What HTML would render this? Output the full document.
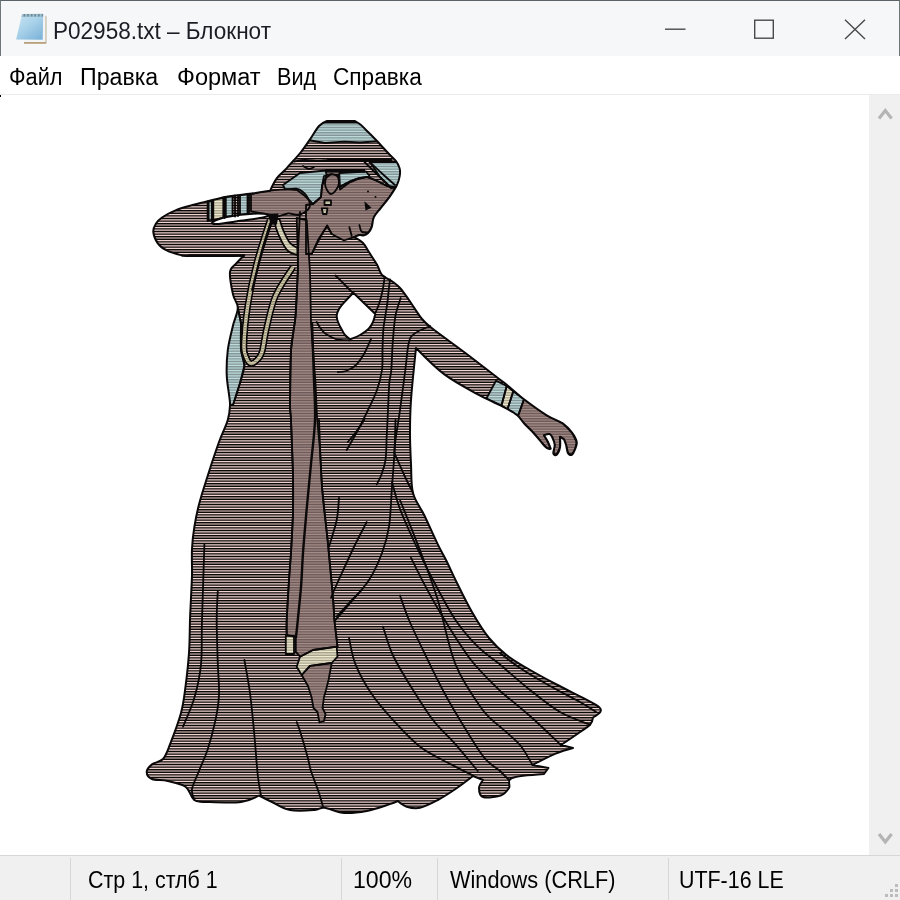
<!DOCTYPE html>
<html lang="ru"><head><meta charset="utf-8"><title>P02958.txt – Блокнот</title>
<style>
html,body{margin:0;padding:0;background:#fff;}
body{width:900px;height:900px;position:relative;overflow:hidden;font-family:"Liberation Sans",sans-serif;color:#000;}
.abs{position:absolute;}
#title{left:0;top:0;width:900px;height:56px;background:#f6f7f9;box-sizing:border-box;border-top:1.6px solid #596367;border-left:1.5px solid #6f777a;border-right:1.5px solid #6f777a;}
.t{position:absolute;white-space:nowrap;font-size:23px;line-height:26px;transform-origin:0 50%;}
#menu{left:0;top:56px;width:900px;height:38px;background:#fff;border-bottom:1.2px solid #ebebeb;}
#scroll{left:869px;top:95px;width:31px;height:760px;background:#f0f0f0;}
#status{left:0;top:855px;width:900px;height:45px;background:#f0f0f0;border-top:1px solid #d7d7d7;box-sizing:border-box;}
.sep{position:absolute;top:858px;width:1px;height:42px;background:#d7d7d7;}
</style></head><body>
<div id="title" class="abs"></div>
<svg class="abs" style="left:12px;top:8px" width="40" height="40" viewBox="12 8 40 40">
<defs><linearGradient id="ig" x1="0.1" y1="0" x2="0.9" y2="1"><stop offset="0" stop-color="#c6e2f1"/><stop offset="0.45" stop-color="#a9d2ea"/><stop offset="1" stop-color="#7cb2d8"/></linearGradient></defs>
<path d="M24,42 L45.3,42 L45.3,15.6 L46.4,16.2 L46.4,43.7 L24,43.7Z" fill="#b0a382"/>
<path d="M26,43.2h19" stroke="#d2a070" stroke-width="0.9" stroke-dasharray="1.2 1"/>
<path d="M23,40 L43,15 L45.3,15.4 L45.3,42 L23.8,42Z" fill="#f3f4f5"/>
<path d="M22,14.4 L43.2,14.2 L42.7,39.8 L16.1,39.6Z" fill="url(#ig)"/>
<path d="M22.2,13.9 L43.2,13.7 L43.1,16.9 L21.4,17.1Z" fill="#9fc0cf"/>
<path d="M23.6,15.3H43" stroke="#6f8c9a" stroke-width="2.6" stroke-dasharray="1.7 1.9"/>
</svg>
<span class="t" style="left:53.2px;top:17.7px;transform:scaleX(0.98);color:#1c1c24;">P02958.txt – Блокнот</span>
<svg class="abs" style="left:650px;top:10px" width="230" height="40" viewBox="650 10 230 40" fill="none" stroke="#4a4a4a" stroke-width="1.4">
<path d="M665,29.2h20.5"/><rect x="754.7" y="20.2" width="18.6" height="18"/><path d="M845,19.8L865,39M865,19.8L845,39"/></svg>
<div id="menu" class="abs"></div>
<span class="t" style="left:9px;top:64.3px;transform:scaleX(0.946);color:#000;">Файл</span><span class="t" style="left:79.5px;top:64.3px;transform:scaleX(1.007);color:#000;">Правка</span><span class="t" style="left:176.5px;top:64.3px;transform:scaleX(1.023);color:#000;">Формат</span><span class="t" style="left:276.6px;top:64.3px;transform:scaleX(0.94);color:#000;">Вид</span><span class="t" style="left:333px;top:64.3px;transform:scaleX(0.984);color:#000;">Справка</span>
<div class="abs" style="left:0;top:95px;width:1.4px;height:2.2px;background:#000"></div>
<div id="scroll" class="abs"></div>
<svg class="abs" style="left:869px;top:96px" width="31" height="760" viewBox="869 96 31 760" fill="none" stroke="#b4b4b4" stroke-width="3.2">
<path d="M879,118.5L885.3,110.5L891.6,118.5"/><path d="M879,834L885.3,842L891.6,834"/></svg>
<svg id="fig" class="abs" style="left:0;top:0" width="900" height="900" viewBox="0 0 900 900">
<defs>
<path id="scan" d="M130 96.3h480M130 98.9h480M130 101.5h480M130 104.1h480M130 106.7h480M130 109.3h480M130 111.9h480M130 114.5h480M130 117.1h480M130 119.7h480M130 122.3h480M130 124.9h480M130 127.5h480M130 130.1h480M130 132.7h480M130 135.3h480M130 137.9h480M130 140.5h480M130 143.1h480M130 145.7h480M130 148.3h480M130 150.9h480M130 153.5h480M130 156.1h480M130 158.7h480M130 161.3h480M130 163.9h480M130 166.5h480M130 169.1h480M130 171.7h480M130 174.3h480M130 176.9h480M130 179.5h480M130 182.1h480M130 184.7h480M130 187.3h480M130 189.9h480M130 192.5h480M130 195.1h480M130 197.7h480M130 200.3h480M130 202.9h480M130 205.5h480M130 208.1h480M130 210.7h480M130 213.3h480M130 215.9h480M130 218.5h480M130 221.1h480M130 223.7h480M130 226.3h480M130 228.9h480M130 231.5h480M130 234.1h480M130 236.7h480M130 239.3h480M130 241.9h480M130 244.5h480M130 247.1h480M130 249.7h480M130 252.3h480M130 254.9h480M130 257.5h480M130 260.1h480M130 262.7h480M130 265.3h480M130 267.9h480M130 270.5h480M130 273.1h480M130 275.7h480M130 278.3h480M130 280.9h480M130 283.5h480M130 286.1h480M130 288.7h480M130 291.3h480M130 293.9h480M130 296.5h480M130 299.1h480M130 301.7h480M130 304.3h480M130 306.9h480M130 309.5h480M130 312.1h480M130 314.7h480M130 317.3h480M130 319.9h480M130 322.5h480M130 325.1h480M130 327.7h480M130 330.3h480M130 332.9h480M130 335.5h480M130 338.1h480M130 340.7h480M130 343.3h480M130 345.9h480M130 348.5h480M130 351.1h480M130 353.7h480M130 356.3h480M130 358.9h480M130 361.5h480M130 364.1h480M130 366.7h480M130 369.3h480M130 371.9h480M130 374.5h480M130 377.1h480M130 379.7h480M130 382.3h480M130 384.9h480M130 387.5h480M130 390.1h480M130 392.7h480M130 395.3h480M130 397.9h480M130 400.5h480M130 403.1h480M130 405.7h480M130 408.3h480M130 410.9h480M130 413.5h480M130 416.1h480M130 418.7h480M130 421.3h480M130 423.9h480M130 426.5h480M130 429.1h480M130 431.7h480M130 434.3h480M130 436.9h480M130 439.5h480M130 442.1h480M130 444.7h480M130 447.3h480M130 449.9h480M130 452.5h480M130 455.1h480M130 457.7h480M130 460.3h480M130 462.9h480M130 465.5h480M130 468.1h480M130 470.7h480M130 473.3h480M130 475.9h480M130 478.5h480M130 481.1h480M130 483.7h480M130 486.3h480M130 488.9h480M130 491.5h480M130 494.1h480M130 496.7h480M130 499.3h480M130 501.9h480M130 504.5h480M130 507.1h480M130 509.7h480M130 512.3h480M130 514.9h480M130 517.5h480M130 520.1h480M130 522.7h480M130 525.3h480M130 527.9h480M130 530.5h480M130 533.1h480M130 535.7h480M130 538.3h480M130 540.9h480M130 543.5h480M130 546.1h480M130 548.7h480M130 551.3h480M130 553.9h480M130 556.5h480M130 559.1h480M130 561.7h480M130 564.3h480M130 566.9h480M130 569.5h480M130 572.1h480M130 574.7h480M130 577.3h480M130 579.9h480M130 582.5h480M130 585.1h480M130 587.7h480M130 590.3h480M130 592.9h480M130 595.5h480M130 598.1h480M130 600.7h480M130 603.3h480M130 605.9h480M130 608.5h480M130 611.1h480M130 613.7h480M130 616.3h480M130 618.9h480M130 621.5h480M130 624.1h480M130 626.7h480M130 629.3h480M130 631.9h480M130 634.5h480M130 637.1h480M130 639.7h480M130 642.3h480M130 644.9h480M130 647.5h480M130 650.1h480M130 652.7h480M130 655.3h480M130 657.9h480M130 660.5h480M130 663.1h480M130 665.7h480M130 668.3h480M130 670.9h480M130 673.5h480M130 676.1h480M130 678.7h480M130 681.3h480M130 683.9h480M130 686.5h480M130 689.1h480M130 691.7h480M130 694.3h480M130 696.9h480M130 699.5h480M130 702.1h480M130 704.7h480M130 707.3h480M130 709.9h480M130 712.5h480M130 715.1h480M130 717.7h480M130 720.3h480M130 722.9h480M130 725.5h480M130 728.1h480M130 730.7h480M130 733.3h480M130 735.9h480M130 738.5h480M130 741.1h480M130 743.7h480M130 746.3h480M130 748.9h480M130 751.5h480M130 754.1h480M130 756.7h480M130 759.3h480M130 761.9h480M130 764.5h480M130 767.1h480M130 769.7h480M130 772.3h480M130 774.9h480M130 777.5h480M130 780.1h480M130 782.7h480M130 785.3h480M130 787.9h480M130 790.5h480M130 793.1h480M130 795.7h480M130 798.3h480M130 800.9h480M130 803.5h480M130 806.1h480M130 808.7h480M130 811.3h480M130 813.9h480M130 816.5h480M130 819.1h480M130 821.7h480M130 824.3h480M130 826.9h480M130 829.5h480" fill="none" stroke-width="1.43"/>
<path id="sil" fill-rule="evenodd" clip-rule="evenodd" d="M327,121C327.0,121.0 355.0,121.0 355,121C355.0,121.0 359.2,123.5 361,125C362.8,126.5 363.5,127.5 366,130C368.5,132.5 372.2,136.0 376,140C379.8,144.0 385.7,150.5 389,154C392.3,157.5 394.2,158.7 396,161C397.8,163.3 398.8,165.8 399.5,168C400.2,170.2 400.2,171.8 400,174C399.8,176.2 399.2,178.8 398.5,181C397.8,183.2 396.0,187.0 396,187C396.0,187.0 392.0,193.6 389.4,197.2C386.8,200.8 383.1,205.0 380.5,208.3C377.9,211.6 375.4,214.0 373.9,217.2C372.4,220.3 372.6,224.6 371.7,227.2C370.8,229.8 369.6,231.5 368.3,232.8C367.0,234.2 365.5,234.9 364,235.3C362.5,235.7 361.1,234.7 359.4,235C357.7,235.3 353.9,237.2 353.9,237.2C353.9,237.2 360.2,240.2 362.8,242.8C365.4,245.4 367.0,249.1 369.4,252.8C371.8,256.5 375.1,261.3 377.2,265C379.3,268.7 379.4,272.2 382,275C384.6,277.8 390.0,279.8 393,282C396.0,284.2 397.3,285.0 400,288C402.7,291.0 405.3,294.8 409,300C412.7,305.2 418.0,314.2 422,319C426.0,323.8 425.6,323.2 433,329C440.4,334.8 455.9,345.8 466.7,354C477.5,362.2 491.1,372.9 497.8,378C504.5,383.1 502.3,381.1 506.7,384.7C511.1,388.2 517.3,394.2 524,399.3C530.7,404.4 540.2,411.3 546.7,415.3C553.2,419.3 558.5,420.4 562.7,423.3C566.9,426.2 569.7,429.6 572,432.7C574.3,435.8 576.2,439.3 576.7,442C577.2,444.7 576.1,446.6 575.3,448.7C574.5,450.8 573.2,453.9 572,454.7C570.8,455.5 569.0,455.0 568,453.3C567.0,451.6 566.7,447.0 566,444.7C565.3,442.4 564.0,439.3 564,439.3C564.0,439.3 560.0,436.7 560,436.7C560.0,436.7 560.5,444.3 560,447.3C559.5,450.3 557.8,453.7 556.7,454.7C555.6,455.7 553.6,455.0 553.3,453.3C553.0,451.6 554.9,447.5 554.7,444.7C554.5,441.9 552.0,436.7 552,436.7C552.0,436.7 550.6,434.2 549.3,434C548.0,433.8 544.0,435.3 544,435.3C544.0,435.3 546.9,439.8 548,442C549.1,444.2 550.7,448.7 550.7,448.7C550.7,448.7 548.5,449.3 546.7,448C544.9,446.7 542.2,443.2 540,440.7C537.8,438.1 536.0,435.6 533.3,432.7C530.6,429.8 526.7,426.2 524,423.3C521.3,420.4 520.2,417.7 517.3,415.3C514.4,412.9 510.7,410.9 506.7,408.7C502.7,406.5 498.1,404.4 493.3,402C488.5,399.6 486.0,399.0 477.8,394.4C469.6,389.8 454.7,382.1 444.4,374.4C434.1,366.7 416.0,348.0 416,348C416.0,348.0 412.0,385.8 411,400C410.0,414.2 410.0,422.3 410,433C410.0,443.7 410.5,454.0 411,464C411.5,474.0 410.8,484.4 413,493C415.2,501.6 420.3,506.9 424.4,515.5C428.5,524.1 434.2,537.0 437.8,544.4C441.4,551.8 442.8,553.6 446,560C449.2,566.4 452.7,574.3 457,583C461.3,591.7 466.7,602.8 472,612C477.3,621.2 483.2,630.8 489,638C494.8,645.2 500.2,650.0 506.5,655C512.8,660.0 518.5,663.2 526.7,668C534.9,672.8 546.0,678.9 555.6,684C565.2,689.1 577.3,694.9 584.5,698.7C591.7,702.5 596.4,704.8 599,707C601.6,709.2 601.4,710.0 600.4,711.7C599.4,713.5 593.0,717.5 593,717.5C593.0,717.5 592.4,722.1 590,724.7C587.6,727.3 583.5,729.6 578.7,733C573.9,736.4 561.0,745.0 561,745C561.0,745.0 573.0,748.0 573,748C573.0,748.0 562.4,750.8 555.6,753.6C548.9,756.4 532.5,765.0 532.5,765C532.5,765.0 548.4,768.0 548.4,768C548.4,768.0 544.0,774.0 544,774C544.0,774.0 517.8,775.7 512,778C506.2,780.3 510.9,785.1 509,788C507.1,790.9 505.0,794.0 500.7,795.5C496.4,797.0 486.6,798.2 483,797C479.4,795.8 479.0,790.8 479,788C479.0,785.2 483.0,780.0 483,780C483.0,780.0 473.0,776.0 473,776C473.0,776.0 461.4,785.0 455.5,789C449.6,793.0 443.7,796.9 437.8,800C431.9,803.1 425.2,806.7 420,807.8C414.8,808.9 410.4,807.8 406.7,806.7C403.0,805.6 397.8,801.0 397.8,801C397.8,801.0 394.2,802.7 389,804.4C383.8,806.1 374.1,809.6 366.7,811C359.3,812.4 351.4,813.5 344.4,813C337.3,812.5 329.4,808.3 324.4,807.8C319.4,807.3 320.1,809.6 314.4,810C308.7,810.4 297.1,811.3 290,810C282.9,808.7 277.2,804.4 272,802C266.8,799.6 259.0,795.5 259,795.5C259.0,795.5 249.5,800.9 241,802C232.5,803.1 215.6,802.3 207.8,802C200.0,801.7 198.1,802.5 194.4,800C190.7,797.5 189.9,789.9 185.5,786.7C181.1,783.5 173.4,782.3 167.8,781C162.2,779.7 155.5,780.5 152,779C148.5,777.5 146.7,774.4 146.7,772C146.7,769.6 149.3,766.6 152,764.4C154.7,762.2 160.0,762.3 163,759C166.0,755.7 167.0,752.1 170,744.4C173.0,736.7 178.4,722.6 181,713C183.6,703.4 184.2,696.7 185.5,686.7C186.8,676.7 188.2,664.1 189,653C189.8,641.9 189.7,629.2 190,620C190.3,610.8 190.7,605.2 191,597.8C191.3,590.4 191.8,583.6 192,575.5C192.2,567.4 191.6,557.1 192,549C192.4,540.9 193.2,534.1 194.4,526.7C195.6,519.3 196.8,512.9 199,504.4C201.2,495.9 204.5,485.9 207.8,475.5C211.1,465.1 215.7,451.2 219,442C222.3,432.8 226.0,426.1 227.8,420C229.6,413.9 229.8,409.8 230,405.5C230.2,401.2 229.6,399.6 229,394.4C228.4,389.2 226.9,381.8 226.7,374.4C226.5,367.0 226.8,358.1 227.8,350C228.9,341.9 231.3,332.5 233,325.5C234.7,318.5 237.8,313.0 237.8,307.8C237.8,302.6 234.3,300.4 233,294.4C231.7,288.4 229.4,277.2 230,272C230.6,266.8 234.4,265.8 236.7,263C239.0,260.2 244.0,255.5 244,255.5C244.0,255.5 233.0,256.0 233,256C233.0,256.0 197.8,256.2 189,256C180.2,255.8 183.7,255.8 180,254.9C176.3,254.0 170.4,252.3 166.7,250.4C163.0,248.5 160.0,246.4 157.8,243.3C155.6,240.2 153.6,235.1 153.3,231.8C153.0,228.5 154.6,225.9 156,223.5C157.4,221.1 158.8,219.7 162,217.5C165.2,215.3 171.0,212.3 175.5,210.4C180.0,208.5 183.8,207.5 189,206C194.2,204.5 200.4,203.1 206.7,201.5C213.0,199.9 218.9,198.1 226.7,196.7C234.5,195.3 246.1,194.3 253.3,193.3C260.5,192.3 270.0,190.8 270,190.8C270.0,190.8 274.2,181.8 276.7,178.3C279.2,174.8 282.8,172.3 285,170C287.2,167.7 287.3,167.4 290,164.4C292.7,161.4 297.7,156.2 301,152C304.3,147.8 307.0,143.7 310,139.4C313.0,135.1 316.2,129.1 319,126C321.8,122.9 327.0,121.0 327,121ZM353.3,292.7C353.3,292.7 375.3,314.0 375.3,314C375.3,314.0 374.1,319.6 373,322C371.9,324.4 370.9,326.5 368.7,328.7C366.5,330.9 363.1,333.2 360,335C356.9,336.8 350.0,339.3 350,339.3C350.0,339.3 346.3,336.6 345,335C343.7,333.4 343.2,332.2 342,330C340.8,327.8 338.9,324.4 338,322C337.1,319.6 336.5,317.5 336.7,315.3C336.9,313.1 337.9,311.0 339,309C340.1,307.0 340.9,306.0 343.3,303.3C345.7,300.6 353.3,292.7 353.3,292.7ZM213,221.7C214.9,220.5 221.3,218.0 228,216.7C234.7,215.4 246.3,214.0 253,213.7C259.7,213.4 266.3,214.1 268,214.7C269.7,215.3 267.7,216.5 263,217.5C258.3,218.5 247.7,219.7 240,220.8C232.3,221.9 221.2,223.8 216.7,224C212.2,224.2 211.1,222.9 213,221.7Z"/>
<g id="solid"><path d="M324,176 L331,174 L339,176 L339.4,187 L349.4,181.7 L358.3,178.3 L367.2,177.2 L376.1,180.5 L387.2,186 L396,187 L389.4,197.2 L380.5,208.3 L373.9,217.2 L371.7,227.2 L368.3,232.8 L364,235.3 L359.4,235 L353.9,237.2 L343.9,240.5 L331.7,234 L327.2,225.6 L318,240 L311.7,254 L306,254 L306,205 L313,204 L321,197 L322,186Z"/><path d="M251,194C251.0,194.0 264.0,191.4 269.7,190.7C275.4,189.9 280.6,189.8 285,189.5C289.4,189.2 293.3,188.3 296.3,188.7C299.3,189.1 301.1,190.4 303,192C304.9,193.6 306.9,195.6 308,198C309.1,200.4 310.2,204.4 309.7,206.7C309.2,209.0 306.9,210.6 305,212C303.1,213.4 300.8,214.8 298,215C295.2,215.2 291.8,213.2 288.3,213.5C284.8,213.8 280.1,216.3 277,216.5C273.9,216.7 274.0,215.6 269.7,214.7C265.4,213.8 251.0,211.3 251,211.3C251.0,211.3 251.0,194.0 251,194Z"/><path d="M296.7,218 L297.8,254 L297.8,272 L295.5,316.7 L291,350 L290,405.5 L291,420 L293,475.5 L293,513 L291,553 L289,580 L286.7,620 L286.7,635 L295.8,637 L295.8,651.7 L300,656.7 L313,650 L337.5,646.7 L336.7,640 L334.4,620 L333,598 L328,544 L322,487 L320,450 L317,417 L315.5,383 L313,350 L311,323 L310,272 L306.7,220Z"/><path d="M524,399.3 L546.7,415.3 L562.7,423.3 L572,432.7 L576.7,442 L575.3,448.7 L572,454.7 L568,453.3 L566,444.7 L564,439.3 L560,436.7 L560,447.3 L556.7,454.7 L553.3,453.3 L554.7,444.7 L552,436.7 L549.3,434 L544,435.3 L548,442 L550.7,448.7 L546.7,448 L540,440.7 L533.3,432.7 L524,423.3 L518,416Z"/><path d="M301.7,675 L310,665.8 L331.7,663 L328.5,680 L326,690 L324,697 L322.5,708 L325.5,714 L324,721 L319.5,722.5 L317.5,712 L313.5,708 L311.5,697 L308,686Z"/></g>
<g id="teal"><path d="M305,122.7 L372,122.7 L386,141 L375.3,141.3 L360,142.5 L344.4,141.7 L325,143 L310.7,140.5 L298,140.5Z"/><path d="M370,162 L405,162 L405,187 L391,188 L380,177Z"/><path d="M283,185 L300,173 L325.5,170.5 L326.7,175 L322,186 L321,197 L313,204 L305,196 L297,190 L285,189Z"/><path d="M339.3,173 L366,171.5 L369.5,176 L364.7,177.5 L357,179.5 L348.7,183 L340,189.5Z"/><path d="M237.8,307.8 L241,323 L241,350 L244.4,365.5 L240,383 L233,405 L218,405 L218,307Z"/><path d="M208.6,201.5 L211.8,201 L211.8,220 L208.6,220.5Z"/><path d="M225.8,197 L232.5,196 L232.5,216 L225.8,217Z"/><path d="M240,195 L247.5,194 L247.5,214 L240,215Z"/><path d="M486.4,398.5 L496,380.7 L506.7,386 L501.5,405.6Z"/><path d="M507.5,409.2 L513.3,391.3 L524,399.3 L518,416Z"/></g>
<g id="cream"><path d="M274.5,219C274.5,219.0 279.5,219.0 279.5,219C279.5,219.0 282.2,228.0 284,232C285.8,236.0 287.8,240.3 290,243C292.2,245.7 297.5,248.0 297.5,248C297.5,248.0 297.5,255.0 297.5,255C297.5,255.0 290.8,253.5 288,251C285.2,248.5 283.0,243.8 281,240C279.0,236.2 277.1,231.5 276,228C274.9,224.5 274.5,219.0 274.5,219Z"/><path d="M213.3,199 L223.3,198 L223.3,218 L213.3,220Z"/><path d="M324.5,200.5 L331,200.5 L331,205 L324.5,205Z"/><path d="M321.7,208.3 L327.5,208.3 L326.5,214 L323,214Z"/><path d="M501.5,405.6 L506.7,386 L513.3,391.3 L507.5,409.2Z"/><path d="M285.8,635.8 L294,635.8 L294,654 L285.8,654Z"/><path d="M300,656.7 L313,650 L336.7,646.7 L337.5,656.7 L331.7,663 L310,665.8 L301.7,675 L296.7,666.7Z"/></g>
<mask id="mU" maskUnits="userSpaceOnUse" x="230" y="210" width="80" height="170"><g fill="none" stroke="#fff" stroke-width="3.2"><path d="M270,220C267.8,227.2 260.4,248.8 256.7,263C253.0,277.2 249.9,291.8 247.8,305.5C245.7,319.2 244.2,336.8 244,345.5C243.8,354.2 245.3,355.0 246.5,358C247.7,361.0 249.2,363.2 251,363.5C252.8,363.8 255.2,361.9 257,360C258.8,358.1 260.4,357.4 262,352C263.6,346.6 264.4,337.1 266.7,327.8C268.9,318.5 271.1,306.1 275.5,296C279.9,285.9 290.1,271.8 293,267"/><path d="M277,219C277.0,219.0 277.0,219.1 277,219.1"/></g></mask>
<clipPath id="cSil"><use href="#sil"/></clipPath>
<clipPath id="cSolid"><path d="M324,176 L331,174 L339,176 L339.4,187 L349.4,181.7 L358.3,178.3 L367.2,177.2 L376.1,180.5 L387.2,186 L396,187 L389.4,197.2 L380.5,208.3 L373.9,217.2 L371.7,227.2 L368.3,232.8 L364,235.3 L359.4,235 L353.9,237.2 L343.9,240.5 L331.7,234 L327.2,225.6 L318,240 L311.7,254 L306,254 L306,205 L313,204 L321,197 L322,186Z"/><path d="M251,194C251.0,194.0 264.0,191.4 269.7,190.7C275.4,189.9 280.6,189.8 285,189.5C289.4,189.2 293.3,188.3 296.3,188.7C299.3,189.1 301.1,190.4 303,192C304.9,193.6 306.9,195.6 308,198C309.1,200.4 310.2,204.4 309.7,206.7C309.2,209.0 306.9,210.6 305,212C303.1,213.4 300.8,214.8 298,215C295.2,215.2 291.8,213.2 288.3,213.5C284.8,213.8 280.1,216.3 277,216.5C273.9,216.7 274.0,215.6 269.7,214.7C265.4,213.8 251.0,211.3 251,211.3C251.0,211.3 251.0,194.0 251,194Z"/><path d="M296.7,218 L297.8,254 L297.8,272 L295.5,316.7 L291,350 L290,405.5 L291,420 L293,475.5 L293,513 L291,553 L289,580 L286.7,620 L286.7,635 L295.8,637 L295.8,651.7 L300,656.7 L313,650 L337.5,646.7 L336.7,640 L334.4,620 L333,598 L328,544 L322,487 L320,450 L317,417 L315.5,383 L313,350 L311,323 L310,272 L306.7,220Z"/><path d="M524,399.3 L546.7,415.3 L562.7,423.3 L572,432.7 L576.7,442 L575.3,448.7 L572,454.7 L568,453.3 L566,444.7 L564,439.3 L560,436.7 L560,447.3 L556.7,454.7 L553.3,453.3 L554.7,444.7 L552,436.7 L549.3,434 L544,435.3 L548,442 L550.7,448.7 L546.7,448 L540,440.7 L533.3,432.7 L524,423.3 L518,416Z"/><path d="M301.7,675 L310,665.8 L331.7,663 L328.5,680 L326,690 L324,697 L322.5,708 L325.5,714 L324,721 L319.5,722.5 L317.5,712 L313.5,708 L311.5,697 L308,686Z"/></clipPath>
<clipPath id="cTeal"><path d="M305,122.7 L372,122.7 L386,141 L375.3,141.3 L360,142.5 L344.4,141.7 L325,143 L310.7,140.5 L298,140.5Z"/><path d="M370,162 L405,162 L405,187 L391,188 L380,177Z"/><path d="M283,185 L300,173 L325.5,170.5 L326.7,175 L322,186 L321,197 L313,204 L305,196 L297,190 L285,189Z"/><path d="M339.3,173 L366,171.5 L369.5,176 L364.7,177.5 L357,179.5 L348.7,183 L340,189.5Z"/><path d="M237.8,307.8 L241,323 L241,350 L244.4,365.5 L240,383 L233,405 L218,405 L218,307Z"/><path d="M208.6,201.5 L211.8,201 L211.8,220 L208.6,220.5Z"/><path d="M225.8,197 L232.5,196 L232.5,216 L225.8,217Z"/><path d="M240,195 L247.5,194 L247.5,214 L240,215Z"/><path d="M486.4,398.5 L496,380.7 L506.7,386 L501.5,405.6Z"/><path d="M507.5,409.2 L513.3,391.3 L524,399.3 L518,416Z"/></clipPath>
<clipPath id="cCream"><path d="M274.5,219C274.5,219.0 279.5,219.0 279.5,219C279.5,219.0 282.2,228.0 284,232C285.8,236.0 287.8,240.3 290,243C292.2,245.7 297.5,248.0 297.5,248C297.5,248.0 297.5,255.0 297.5,255C297.5,255.0 290.8,253.5 288,251C285.2,248.5 283.0,243.8 281,240C279.0,236.2 277.1,231.5 276,228C274.9,224.5 274.5,219.0 274.5,219Z"/><path d="M213.3,199 L223.3,198 L223.3,218 L213.3,220Z"/><path d="M324.5,200.5 L331,200.5 L331,205 L324.5,205Z"/><path d="M321.7,208.3 L327.5,208.3 L326.5,214 L323,214Z"/><path d="M501.5,405.6 L506.7,386 L513.3,391.3 L507.5,409.2Z"/><path d="M285.8,635.8 L294,635.8 L294,654 L285.8,654Z"/><path d="M300,656.7 L313,650 L336.7,646.7 L337.5,656.7 L331.7,663 L310,665.8 L301.7,675 L296.7,666.7Z"/></clipPath>
</defs>
<use href="#sil" fill="#f0d4d0"/>
<use href="#scan" stroke="#0c0909" clip-path="url(#cSil)"/>
<use href="#solid" fill="#a48d89"/>
<use href="#scan" stroke="#6f5c5a" clip-path="url(#cSolid)"/>
<use href="#teal" fill="#bddbd9" clip-path="url(#cSil)"/>
<g clip-path="url(#cSil)"><use href="#scan" stroke="#84969a" clip-path="url(#cTeal)"/></g>
<use href="#cream" fill="#f0ead0"/>
<use href="#scan" stroke="#a8a48c" clip-path="url(#cCream)"/>
<g fill="none" stroke="#0a0808" stroke-width="6.6" stroke-linejoin="round" stroke-linecap="butt"><path d="M270,220C267.8,227.2 260.4,248.8 256.7,263C253.0,277.2 249.9,291.8 247.8,305.5C245.7,319.2 244.2,336.8 244,345.5C243.8,354.2 245.3,355.0 246.5,358C247.7,361.0 249.2,363.2 251,363.5C252.8,363.8 255.2,361.9 257,360C258.8,358.1 260.4,357.4 262,352C263.6,346.6 264.4,337.1 266.7,327.8C268.9,318.5 271.1,306.1 275.5,296C279.9,285.9 290.1,271.8 293,267"/><path d="M277,219C277.0,219.0 277.0,219.1 277,219.1"/></g>
<g fill="none" stroke="#e6dcb8" stroke-width="3.2" stroke-linejoin="round" stroke-linecap="butt"><path d="M270,220C267.8,227.2 260.4,248.8 256.7,263C253.0,277.2 249.9,291.8 247.8,305.5C245.7,319.2 244.2,336.8 244,345.5C243.8,354.2 245.3,355.0 246.5,358C247.7,361.0 249.2,363.2 251,363.5C252.8,363.8 255.2,361.9 257,360C258.8,358.1 260.4,357.4 262,352C263.6,346.6 264.4,337.1 266.7,327.8C268.9,318.5 271.1,306.1 275.5,296C279.9,285.9 290.1,271.8 293,267"/><path d="M277,219C277.0,219.0 277.0,219.1 277,219.1"/></g>
<use href="#scan" stroke="#8c8870" mask="url(#mU)"/>
<g fill="none" stroke="#0a0808" stroke-width="1.8" stroke-linejoin="round" stroke-linecap="round">
<path d="M294,161.5C295.8,161.2 301.3,160.1 305,160C308.7,159.9 312.2,160.9 316,161C319.8,161.1 326.0,160.4 328,160.3"/><path d="M303,166C304.0,166.5 307.2,168.8 309,169C310.8,169.2 313.2,167.3 314,167"/><path d="M364.5,162C366.7,164.2 373.4,170.8 377.8,175C382.2,179.2 388.8,185.4 391,187.5"/><path d="M369.5,162C371.6,163.9 377.8,169.7 382,173.5C386.2,177.3 392.8,183.1 395,185"/><path d="M339.4,187C341.1,186.1 346.2,183.1 349.4,181.7C352.5,180.2 355.3,179.1 358.3,178.3C361.3,177.6 364.2,176.8 367.2,177.2C370.2,177.6 372.8,179.0 376.1,180.5C379.4,182.0 384.2,184.8 387.2,186C390.2,187.2 392.9,187.2 394,187.5"/><path d="M326,178C326.8,177.4 329.2,174.8 331,174.5C332.8,174.2 335.7,174.6 337,176C338.3,177.4 339.2,180.7 339,183C338.8,185.3 337.3,188.2 336,190C334.7,191.8 332.5,194.0 331,194C329.5,194.0 328.0,191.7 327,190C326.0,188.3 325.2,186.0 325,184C324.8,182.0 325.8,179.0 326,178"/><path d="M327.2,225.6C326.0,227.7 322.6,233.3 320,238C317.4,242.7 313.1,251.3 311.7,254"/><path d="M327.2,225.6C327.9,227.0 330.9,232.6 331.7,234"/><path d="M349.4,227.2C349.8,228.7 351.3,234.5 351.7,236"/><path d="M359.4,225C359.8,226.1 360.2,230.2 361.5,231.5C362.8,232.8 366.1,232.3 367,232.5"/><path d="M335.5,275.5C337.1,277.1 342.0,282.0 345,285C348.0,288.0 351.9,291.9 353.3,293.3"/><path d="M384.7,276.7C384.4,278.9 383.6,285.6 382.7,290C381.8,294.4 380.5,299.5 379.3,303.3C378.1,307.1 376.0,311.4 375.3,313"/><path d="M390,279.3C389.8,281.4 388.9,288.0 388.5,292C388.1,296.0 387.9,299.0 387.3,303.3C386.7,307.6 385.7,313.6 385,318C384.3,322.4 383.7,324.7 383.3,330C382.9,335.3 382.7,343.3 382.5,350C382.3,356.7 382.9,363.3 382,370C381.1,376.7 379.3,383.3 377,390C374.7,396.7 371.2,403.3 368,410C364.8,416.7 361.6,423.3 358,430C354.4,436.7 348.6,446.7 346.7,450"/><path d="M400.7,298C399.8,301.1 396.6,309.1 395.3,316.7C394.0,324.2 393.4,334.4 392.7,343.3C392.0,352.2 391.9,363.4 391.3,370C390.7,376.6 389.9,376.3 389.3,383C388.8,389.7 388.4,401.1 388,410C387.6,418.9 387.1,428.4 386.7,436.7C386.3,445.0 386.4,453.6 385.5,460C384.6,466.4 382.8,470.9 381.3,475C379.8,479.1 377.5,482.8 376.7,484.4"/><path d="M316.7,322C317.4,323.2 319.4,327.0 321,329C322.6,331.0 323.4,332.3 326,334C328.6,335.7 332.7,338.2 336.7,339.3C340.7,340.4 347.8,340.1 350,340.3"/><path d="M371,339C369.8,341.5 366.6,349.6 364,354C361.4,358.4 358.5,362.7 355.5,365.5C352.5,368.3 348.9,369.9 346,371C343.1,372.1 339.2,371.8 337.8,372"/><path d="M241,323C241.0,327.5 240.4,342.9 241,350C241.6,357.1 244.6,360.0 244.4,365.5C244.2,371.0 241.9,376.4 240,383C238.1,389.6 234.2,401.3 233,405"/><path d="M237.8,307.8C238.3,310.3 240.5,320.5 241,323"/><path d="M297.8,254C297.8,257.0 298.2,261.6 297.8,272C297.4,282.4 296.6,303.7 295.5,316.7C294.4,329.7 291.9,335.2 291,350C290.1,364.8 290.0,393.8 290,405.5C290.0,417.2 290.5,408.3 291,420C291.5,431.7 292.7,460.0 293,475.5C293.3,491.0 293.3,500.1 293,513C292.7,525.9 291.7,541.8 291,553C290.3,564.2 289.7,568.8 289,580C288.3,591.2 287.1,610.8 286.7,620C286.3,629.2 286.7,632.5 286.7,635"/><path d="M319,420C319.5,431.2 320.5,466.3 322,487C323.5,507.7 326.2,525.5 328,544C329.8,562.5 331.9,585.3 333,598C334.1,610.7 333.8,613.0 334.4,620C335.0,627.0 336.2,635.5 336.7,640C337.2,644.5 337.4,645.8 337.5,647"/><path d="M430,326C427.3,327.3 417.6,331.1 414,334C410.4,336.9 410.1,337.3 408.7,343.3C407.2,349.3 406.8,358.9 405.3,370C403.9,381.1 401.6,398.3 400,410C398.4,421.7 396.4,432.8 395.5,440C394.6,447.2 394.6,450.8 394.4,453"/><path d="M364.4,420C363.0,422.0 358.8,428.3 356,432C353.2,435.7 349.2,440.3 347.8,442"/><path d="M395.5,420C395.3,425.5 395.0,441.9 394.4,453C393.8,464.1 392.9,474.4 392,486.7C391.1,499.0 390.7,515.7 389,526.7C387.3,537.8 385.3,544.1 382,553C378.7,561.9 374.5,571.4 369,580C363.5,588.6 354.6,597.7 349,604.4C343.4,611.1 337.8,617.4 335.5,620"/><path d="M394.4,453C396.1,456.8 401.3,468.8 404.4,475.5C407.5,482.2 411.6,490.1 413,493"/><path d="M392,482C393.3,486.5 396.1,498.6 400,509C403.9,519.4 410.0,532.6 415.5,544.4C421.0,556.2 426.3,567.4 433,580C439.7,592.6 448.0,608.9 455.5,620C463.0,631.1 470.4,639.3 477.8,646.7C485.2,654.1 496.3,661.5 500,664.4"/><path d="M411,557.8C413.2,562.2 419.2,574.8 424.4,584.4C429.6,594.0 434.2,602.9 442,615.5C449.8,628.1 461.3,647.4 471,660C480.7,672.6 495.2,685.8 500,691"/><path d="M339,497.8C338.6,501.5 338.4,511.9 336.7,520C335.0,528.1 330.3,542.2 329,546.7"/><path d="M366.7,522C364.4,526.5 357.8,539.0 353,549C348.2,559.0 341.5,573.9 337.8,582C334.1,590.1 332.1,595.2 331,597.8"/><path d="M400,595.5C401.5,599.6 404.9,610.4 409,620C413.1,629.6 418.5,640.8 424.4,653C430.3,665.2 437.3,680.0 444.4,693C451.4,706.0 460.0,720.2 466.7,731C473.4,741.8 478.8,751.1 484.4,757.8C489.9,764.5 497.4,768.8 500,771"/><path d="M400,500C403.7,509.2 415.7,538.8 422,555.5C428.3,572.2 432.2,581.9 437.8,600C443.4,618.1 448.1,646.2 455.5,664.4C462.9,682.6 474.6,698.6 482,709C489.4,719.4 497.0,723.8 500,726.7"/><path d="M383,626.7C384.7,631.5 388.3,645.5 393,655.5C397.7,665.5 404.3,676.0 411,686.7C417.7,697.5 425.6,710.4 433,720C440.4,729.6 448.0,735.9 455.5,744.4C463.0,752.9 474.1,766.6 477.8,771"/><path d="M349,637.8C350.1,642.2 351.8,655.2 355.5,664.4C359.2,673.6 364.8,683.7 371,693C377.2,702.3 384.8,711.0 393,720C401.2,729.0 410.3,739.3 420,746.7C429.7,754.1 442.2,759.6 451,764.4C459.8,769.2 469.3,773.6 473,775.5"/><path d="M361.7,590C359.6,592.2 353.2,598.5 349,603C344.8,607.5 338.8,614.4 336.7,616.7"/><path d="M204.4,544.4C204.0,557.0 202.6,600.0 202,620C201.4,640.0 202.3,651.4 201,664.4C199.7,677.4 197.4,687.4 194.4,697.8C191.4,708.2 184.9,721.9 183,726.7"/><path d="M217.8,591C217.6,595.8 216.7,607.8 216.7,620C216.7,632.2 217.4,651.5 217.8,664C218.2,676.5 219.4,685.7 219,695C218.6,704.3 217.4,711.0 215.5,720C213.6,729.0 210.6,740.5 207.8,749C205.1,757.5 201.6,764.3 199,771C196.4,777.7 192.8,784.2 192,789C191.2,793.8 194.0,798.2 194.4,800"/><path d="M244.4,660C245.3,665.5 248.3,680.4 250,693C251.7,705.6 253.1,721.8 254.4,735.5C255.7,749.2 256.7,765.5 257.8,775.5C258.9,785.5 260.5,792.2 261,795.5"/><path d="M296.7,722C297.2,723.5 298.1,725.0 300,731C301.9,737.0 306.0,751.1 307.8,757.8C309.6,764.5 309.1,765.1 311,771C312.9,776.9 317.0,787.0 319,793C321.0,799.0 322.3,804.4 323,806.7"/><path d="M500,653C503.3,655.5 511.7,662.5 520,668C528.3,673.5 540.0,680.3 550,686C560.0,691.7 572.3,697.7 580,702C587.7,706.3 593.3,710.3 596,712"/><path d="M500,664.4C505.0,668.7 520.0,682.1 530,690C540.0,697.9 550.0,706.2 560,712C570.0,717.8 585.0,722.6 590,724.7"/><path d="M500,691C505.0,695.2 519.8,707.0 530,716C540.2,725.0 555.8,740.2 561,745"/><path d="M500,726.7C503.3,729.8 514.6,738.6 520,745C525.4,751.4 530.4,761.7 532.5,765"/><path d="M500,771C501.5,772.5 507.5,778.5 509,780"/><path d="M207.6,201.5C207.6,204.8 207.6,217.8 207.6,221"/><path d="M212.6,200.5C212.6,203.8 212.6,217.2 212.6,220.5"/><path d="M224.5,197C224.5,200.5 224.5,214.5 224.5,218"/><path d="M235,195.5C235.0,199.0 235.0,213.0 235,216.5"/><path d="M238,195.5C238.0,198.9 238.0,212.6 238,216"/><path d="M249,194C249.0,197.3 249.0,210.7 249,214"/><path d="M272,218C270.3,223.3 265.3,238.0 262,250C258.7,262.0 253.7,283.3 252,290"/><path d="M300,212C299.6,219.0 298.2,247.0 297.8,254"/>
<g clip-path="url(#cSil)"><use href="#solid"/><use href="#teal"/><use href="#cream"/></g>
</g>
<g fill="none" stroke="#0a0808" stroke-width="2.4" stroke-linejoin="round" stroke-linecap="round">
<path d="M312,323C312.3,332.5 313.5,363.8 314,380C314.5,396.2 315.5,406.0 315,420C314.5,434.0 312.4,449.2 311,464C309.6,478.8 308.0,494.2 306.7,509C305.4,523.8 303.9,540.0 303,553C302.1,566.0 301.9,575.8 301,587C300.1,598.2 298.6,611.7 297.8,620C297.0,628.3 296.3,634.2 296,637"/><path d="M328,160.3C338.5,160.3 380.5,160.3 391,160.3"/><path d="M189,255.5C198.2,255.5 234.8,255.5 244,255.5"/>
</g>
<path d="M325.5,170.7H365" stroke="#0a0808" stroke-width="3.6" fill="none"/>
<use href="#sil" fill="none" stroke="#0a0808" stroke-width="2" stroke-linejoin="round"/>
<!-- face details -->
<g fill="#0a0808"><path d="M267.5,214 L278.5,213.5 L277,224.5 L271,224.5Z"/><path d="M364.4,201.2 L371.6,207.8 L365.5,210.5Z"/><circle cx="368" cy="191.5" r="1"/><circle cx="375.5" cy="197" r="1"/></g>
</svg>
<div id="status" class="abs"></div>
<div class="sep" style="left:70px"></div><div class="sep" style="left:341px"></div><div class="sep" style="left:437px"></div><div class="sep" style="left:668px"></div>
<span class="t" style="left:88.2px;top:866.6px;transform:scaleX(0.931);color:#000;">Стр 1, стлб 1</span><span class="t" style="left:353.2px;top:866.6px;transform:scaleX(1.005);color:#000;">100%</span><span class="t" style="left:449.5px;top:866.6px;transform:scaleX(0.945);color:#000;">Windows (CRLF)</span><span class="t" style="left:678.6px;top:866.6px;transform:scaleX(0.931);color:#000;">UTF-16 LE</span>
<svg class="abs" style="left:882px;top:882px" width="18" height="18" viewBox="0 0 18 18" fill="#bcbcbc">
<rect x="13" y="2" width="3" height="3"/><rect x="8" y="7" width="3" height="3"/><rect x="13" y="7" width="3" height="3"/><rect x="3" y="12" width="3" height="3"/><rect x="8" y="12" width="3" height="3"/><rect x="13" y="12" width="3" height="3"/></svg>
</body></html>
